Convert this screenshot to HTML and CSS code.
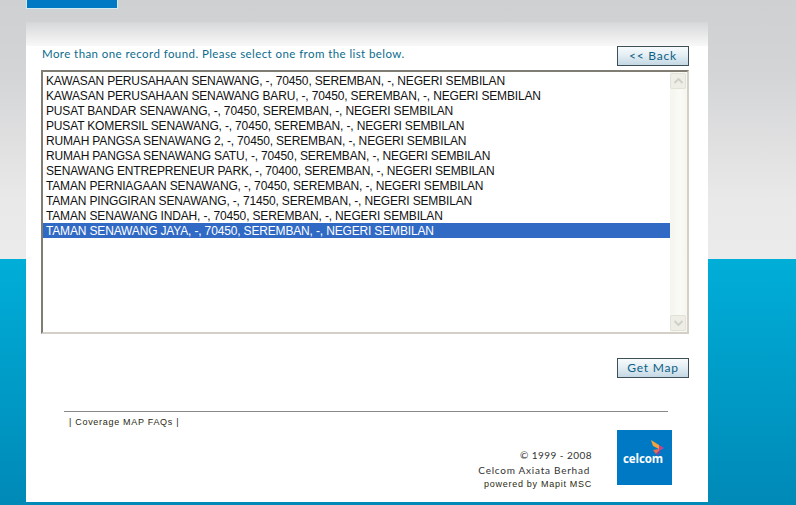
FILE: index.html
```html
<!DOCTYPE html>
<html lang="en">
<head>
<meta charset="utf-8">
<title>Coverage Map</title>
<link rel="stylesheet" href="styles.css">
</head>
<body>
<div class="page">
  <div class="tab"></div>
  <main class="panel">
    <div class="message-row">
      <p class="message">More than one record found. Please select one from the list below.</p>
      <button class="btn btn-back" type="button">&lt;&lt; Back</button>
    </div>
    <div class="listbox">
      <ul class="options">
        <li>KAWASAN PERUSAHAAN SENAWANG, -, 70450, SEREMBAN, -, NEGERI SEMBILAN</li>
        <li>KAWASAN PERUSAHAAN SENAWANG BARU, -, 70450, SEREMBAN, -, NEGERI SEMBILAN</li>
        <li>PUSAT BANDAR SENAWANG, -, 70450, SEREMBAN, -, NEGERI SEMBILAN</li>
        <li>PUSAT KOMERSIL SENAWANG, -, 70450, SEREMBAN, -, NEGERI SEMBILAN</li>
        <li>RUMAH PANGSA SENAWANG 2, -, 70450, SEREMBAN, -, NEGERI SEMBILAN</li>
        <li>RUMAH PANGSA SENAWANG SATU, -, 70450, SEREMBAN, -, NEGERI SEMBILAN</li>
        <li>SENAWANG ENTREPRENEUR PARK, -, 70400, SEREMBAN, -, NEGERI SEMBILAN</li>
        <li>TAMAN PERNIAGAAN SENAWANG, -, 70450, SEREMBAN, -, NEGERI SEMBILAN</li>
        <li>TAMAN PINGGIRAN SENAWANG, -, 71450, SEREMBAN, -, NEGERI SEMBILAN</li>
        <li>TAMAN SENAWANG INDAH, -, 70450, SEREMBAN, -, NEGERI SEMBILAN</li>
        <li class="selected">TAMAN SENAWANG JAYA, -, 70450, SEREMBAN, -, NEGERI SEMBILAN</li>
      </ul>
      <div class="scrollbar">
        <span class="scroll-btn"><svg width="9" height="6" viewBox="0 0 9 6"><path d="M0.5 5 L4.5 1 L8.5 5" fill="none" stroke="#cfd0c6" stroke-width="2"/></svg></span>
        <span class="scroll-btn"><svg width="9" height="6" viewBox="0 0 9 6"><path d="M0.5 1 L4.5 5 L8.5 1" fill="none" stroke="#cfd0c6" stroke-width="2"/></svg></span>
      </div>
    </div>
    <div class="action-row">
      <button class="btn" type="button">Get Map</button>
    </div>
    <footer class="footer">
      <div class="links">| Coverage MAP FAQs |</div>
      <div class="footer-bottom">
        <div class="legal">
          <div class="legal-line">© 1999 - 2008</div>
          <div class="legal-line company">Celcom Axiata Berhad</div>
          <div class="powered">powered by Mapit MSC</div>
        </div>
        <div class="logo">
          <svg class="logo-mark" width="14" height="17" viewBox="0 0 14 17">
            <path d="M0 0 L8 5 L8 9 L2 6 Z" fill="#f2a33a"/>
            <path d="M8 5 L13 8 L8 11 Z" fill="#c9408f"/>
            <path d="M2 10 L8 9 L8 11 L5 14 Z" fill="#ef6a4c"/>
            <path d="M5 14 L8 11 L10 12 L5 16 Z" fill="#8e3f9e"/>
          </svg>
          <span class="logo-text">celcom</span>
        </div>
      </div>
    </footer>
  </main>
</div>
</body>
</html>
```
FILE: styles.css
```css
* { box-sizing: border-box; }
html, body { margin: 0; padding: 0; height: 505px; overflow: hidden; }
body {
  background:
    linear-gradient(180deg, #00aed8 0, #0089b7 100%) 0 259px / 100% 246px no-repeat,
    linear-gradient(180deg, #cfd0d2 0, #d3d4d6 70px, #e9e9e9 200px, #ebebeb 259px) 0 0 / 100% 259px no-repeat;
}
.page { width: 708px; margin-left: 26px; }
.tab {
  width: 92px;
  height: 9px;
  background: #0079c4;
  border: 1px solid #cfeaf3;
  border-top: 0;
}
.panel {
  margin-top: 13px;
  width: 682px;
  height: 480px;
  background: linear-gradient(180deg, #d6d7d9 0, #f8f8f8 23.5px, #ffffff 24px, #ffffff 100%);
  padding: 24px 19px 0 15px;
  display: flex;
  flex-direction: column;
}
.message-row {
  display: flex;
  justify-content: space-between;
  align-items: flex-start;
  height: 24px;
}
.message {
  margin: 1px 0 0 1px;
  font: 11.5px/13px "Lato", sans-serif;
  color: #0b6c8c;
  letter-spacing: 0.42px;
  white-space: nowrap;
}
.btn {
  width: 72px;
  height: 20px;
  padding: 0;
  border: 1px solid #3f4f5a;
  background: linear-gradient(180deg, #f7fbfd 0, #e4eef4 45%, #c4d8e4 100%);
  color: #0b5f86;
  font: 12px/18px "Lato", sans-serif;
  letter-spacing: 0.8px;
}
.listbox {
  width: 648px;
  height: 264px;
  display: flex;
  border: 2px solid;
  border-color: #7f7d74 #d4d0c8 #d4d0c8 #7f7d74;
  background: #fff;
}
.options {
  list-style: none;
  margin: 0;
  padding: 1px 0 0;
  flex: 1;
  min-width: 0;
  font: 12px/15px "Liberation Sans", sans-serif;
  letter-spacing: -0.16px;
  color: #111;
}
.options li { padding: 1px 0 0 3px; height: 15px; white-space: nowrap; }
.options .selected { background: #316ac5; color: #fff; }
.scrollbar {
  width: 17px;
  flex: none;
  background: linear-gradient(90deg, #f5f5ef, #fafaf6 60%, #f6f6ef);
  display: flex;
  flex-direction: column;
  justify-content: space-between;
  padding: 1px 1px 1px 0;
}
.scroll-btn {
  width: 16px;
  height: 16px;
  display: flex;
  align-items: center;
  justify-content: center;
  background: #eeeee6;
  border: 1px solid #e2e2d9;
  border-radius: 2px;
}
.action-row {
  margin-top: 24px;
  width: 648px;
  display: flex;
  justify-content: flex-end;
}
.footer {
  margin: 33px 0 0 23px;
  width: 604px;
  border-top: 1px solid #888;
}
.links {
  margin: 5px 0 0 5px;
  font: 9px/11px "Liberation Sans", sans-serif;
  letter-spacing: 0.7px;
  color: #2a2a10;
}
.footer-bottom {
  display: flex;
  justify-content: flex-end;
  margin-right: -4px;
  margin-top: 3px;
}
.legal {
  margin: 17px 25px 0 0;
  text-align: right;
  width: 180px;
  color: #333;
  font: 10px/15px "Lato", sans-serif;
}
.legal-line { height: 15px; letter-spacing: 0.45px; }
.company { padding-right: 2px; letter-spacing: 0.75px; }
.powered {
  font: 9px/13px "Liberation Sans", sans-serif;
  letter-spacing: 0.72px;
  color: #2a2a10;
}
.logo {
  width: 55px;
  height: 55px;
  margin-top: -1px;
  background: #0079c4;
  position: relative;
}
.logo-mark { position: absolute; left: 34px; top: 10px; }
.logo-text {
  position: absolute;
  left: 6px;
  top: 22px;
  color: #fff;
  font: 700 11.5px/14px "Open Sans", sans-serif;
  letter-spacing: -0.1px;
}
```
